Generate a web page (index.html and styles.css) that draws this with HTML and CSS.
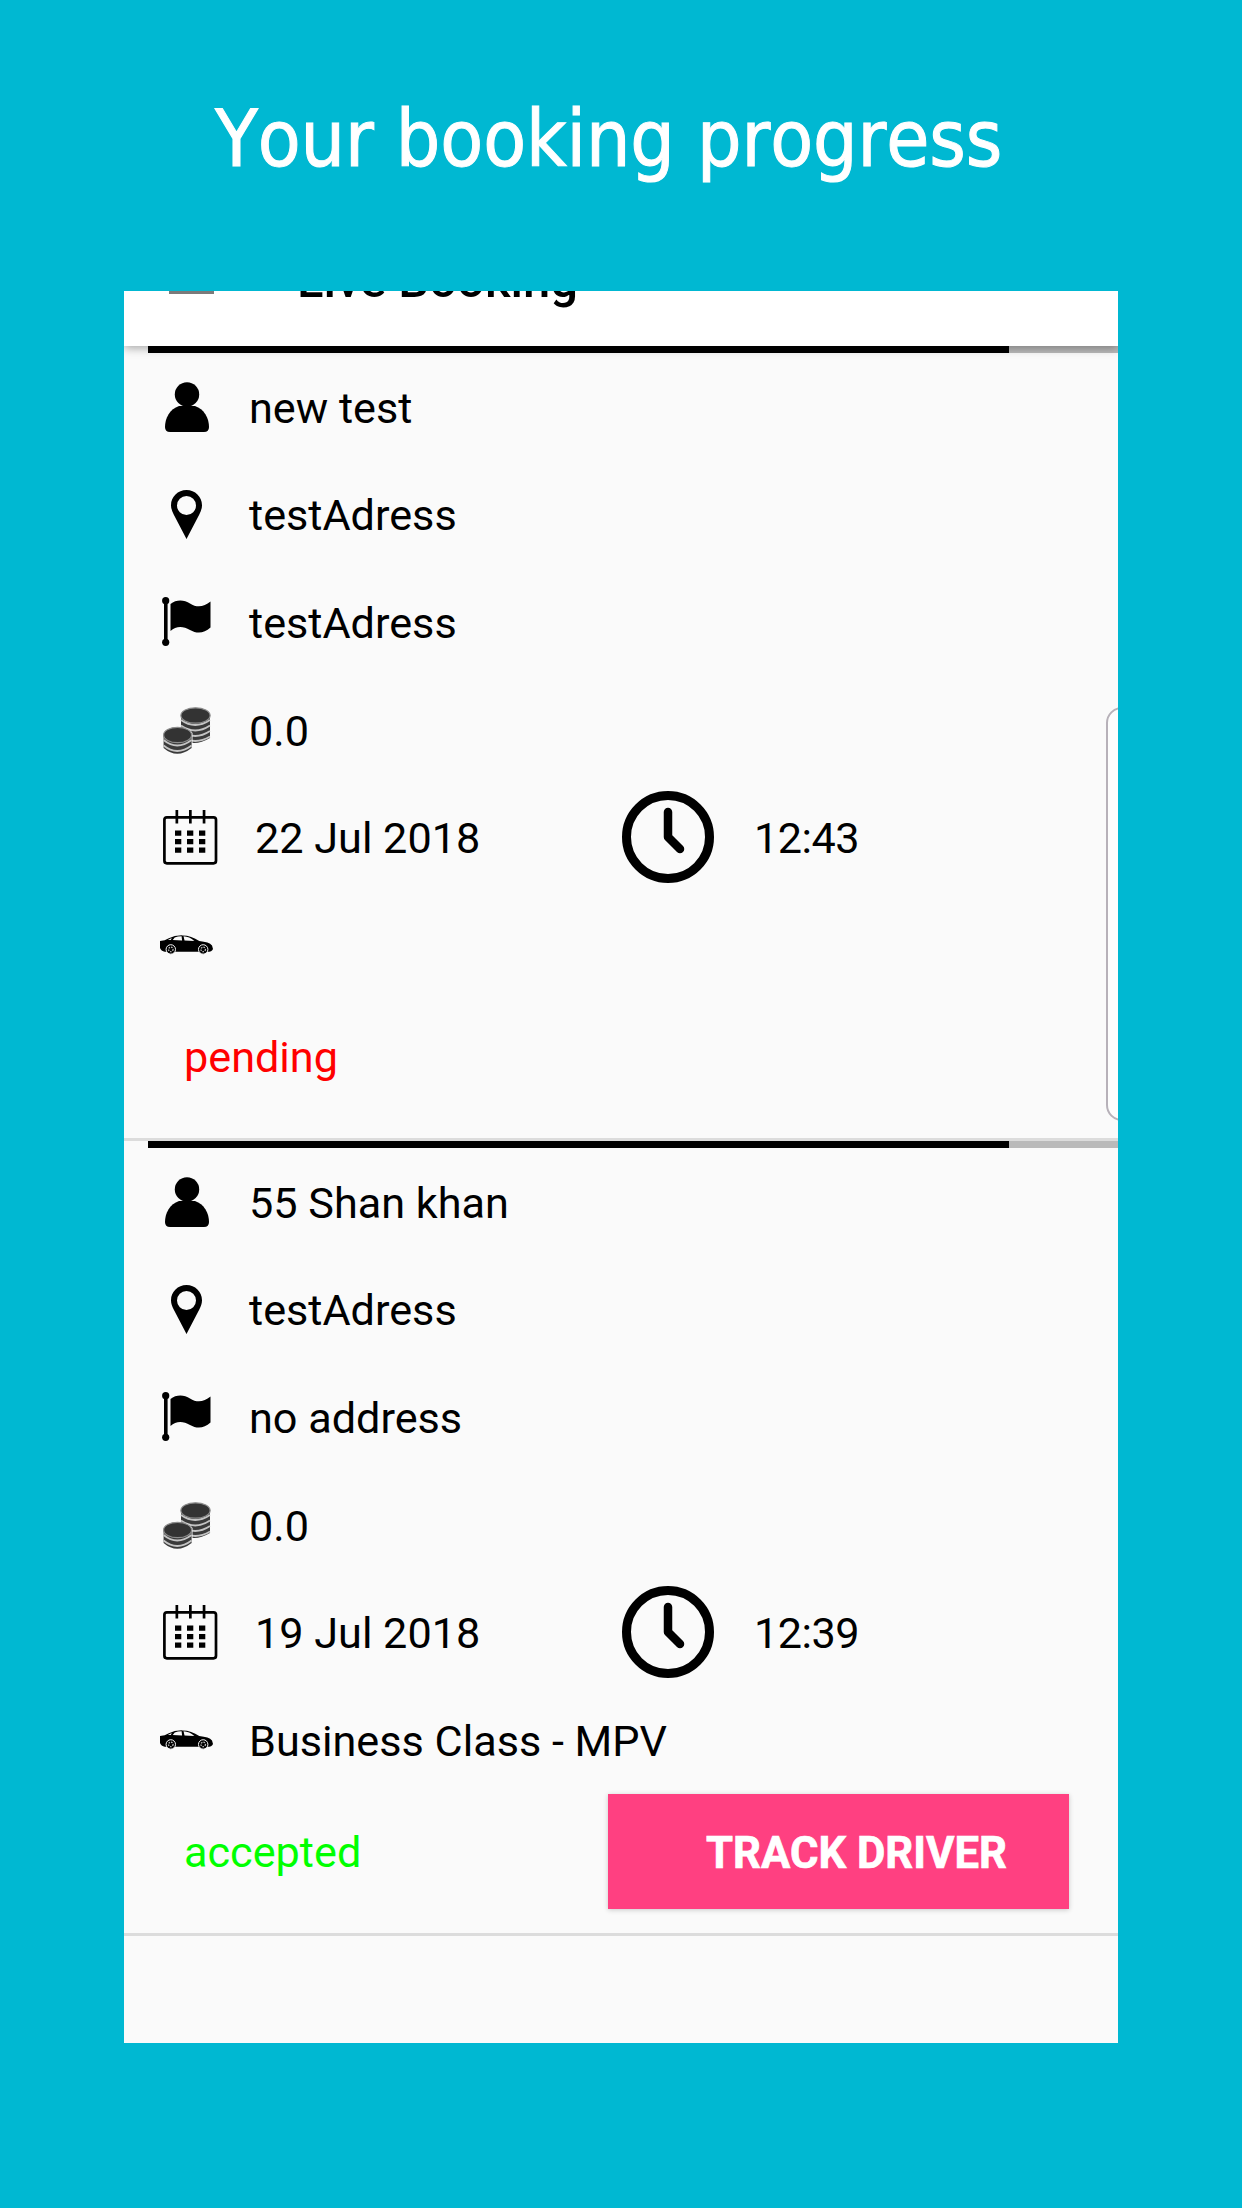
FILE: index.html
```html
<!DOCTYPE html>
<html lang="en">

<head>
    <meta charset="UTF-8">
    <meta name="viewport" content="width=device-width, initial-scale=1.0">

    <title>Live Booking</title>
    <link rel="stylesheet" href="styles.css">
</head>

<body>
    <svg class="sprite">
        <symbol id="person" viewBox="0 0 44 50">
            <circle cx="22" cy="12.4" r="12.2"/>
            <path d="M14 24C5 27 0 36 0 45Q0 50 5 50H39Q44 50 44 45C44 36 39 27 30 24Z"/>
        </symbol>
        <symbol id="pin" viewBox="0 0 31 49">
            <path fill-rule="evenodd" d="M15.500 0C6.900 0 0 6.700 0 15.200C0 18.500 1.200 21.500 2.700 24.500L15.500 49L28.300 24.500C29.800 21.500 31 18.500 31 15.200C31 6.700 24.100 0 15.500 0ZM15.500 6A9.500 9.500 0 1 1 15.500 25A9.500 9.500 0 1 1 15.500 6Z"/>
        </symbol>
        <symbol id="flag" viewBox="0 0 49 49">
            <circle cx="3.700" cy="3.700" r="3.600"/>
            <circle cx="3.700" cy="45.300" r="3.600"/>
            <path d="M2 4H5.600V45H2Z"/>
            <path d="M8.500 7C14 2.500 22 2.500 28 6.500C35 11 42 10 48.500 4.500V30.500C42 36.500 35 37 28 33C21 29 14 29 8.500 34Z"/>
        </symbol>
        <symbol id="coins" viewBox="0 0 48 48">
            <path fill="#3a3a3a" d="M18 8V31Q30 41 47 31V8Z"/>
            <path fill="none" stroke="#c4c4c4" stroke-width="1.800" d="M18 13Q32 23 47 13M18 18.500Q32 28.500 47 18.500M18 24Q32 34 47 24M18 29.500Q32 38.500 47 29.500"/>
            <ellipse cx="32.500" cy="8.500" rx="14.600" ry="7.700" fill="#333" stroke="#8c8c8c" stroke-width="1.200"/>
            <path fill="#fafafa" d="M18 21Q26 20 29.500 26V39H18Z"/>
            <path fill="#3a3a3a" d="M.600 28V41Q14 52.500 28.600 41V28Z"/>
            <path fill="none" stroke="#c4c4c4" stroke-width="1.800" d="M.600 33Q14 44 28.600 33M.600 38.500Q14 49.500 28.600 38.500"/>
            <ellipse cx="14.600" cy="28" rx="14" ry="7.700" fill="#333" stroke="#8c8c8c" stroke-width="1.200"/>
        </symbol>
        <symbol id="calendar" viewBox="0 0 55 55">
            <rect x="1.400" y="7.300" width="51.600" height="46" rx="2.500" fill="none" stroke="#000" stroke-width="2.700"/>
            <path d="M12.500 0H15.200V13.500H12.500ZM26 0H28.700V13.500H26ZM39.700 0H42.400V13.500H39.700Z"/>
            <path d="M12 20.500h6.300v5.200h-6.300zM24 20.500h6.300v5.200h-6.300zM36 20.500h6.300v5.200h-6.300zM12 29h6.300v5.200h-6.300zM24 29h6.300v5.200h-6.300zM36 29h6.300v5.200h-6.300zM12 37.500h6.300v5.200h-6.300zM24 37.500h6.300v5.200h-6.300zM36 37.500h6.300v5.200h-6.300z"/>
        </symbol>
        <symbol id="clock" viewBox="0 0 92 92">
            <circle cx="46" cy="46" r="41.500" fill="none" stroke="#000" stroke-width="9"/>
            <path d="M46 21V46L58 58" fill="none" stroke="#000" stroke-width="8.500" stroke-linecap="round" stroke-linejoin="round"/>
        </symbol>
        <symbol id="car" viewBox="0 0 54 20">
            <path d="M0 6Q5 5.500 9 3Q15 0 23 .2Q32 .2 40 6Q50 7 53 10.500L54 14Q53 17 48 17H5Q1 16 0 13Z"/>
            <path fill="#fafafa" d="M13 5L15 2.300Q18 1.200 22 1.200L22.500 5.500ZM24 1.200Q30 1.500 35 6L25 5.500ZM8 5L12 2.800L11 5Z"/>
            <g stroke="#fafafa" stroke-width="1">
                <circle cx="11" cy="14.500" r="4.800"/>
                <circle cx="44" cy="14.500" r="4.800"/>
            </g>
            <g fill="none" stroke="#bbb" stroke-width="1.300" stroke-dasharray="1.500 1">
                <circle cx="11" cy="14.500" r="2.300"/>
                <circle cx="44" cy="14.500" r="2.300"/>
            </g>
        </symbol>
    </svg>

    <h1 class="title">Your booking progress</h1>

    <div class="screen">
        <div class="toolbar">
            <div class="menu"></div>
            <div class="toolbar_title">Live Booking</div>
        </div>

        <div class="booking">
            <div class="progress"><div class="progress_done"></div></div>
            <div class="row">
                <div class="icon"><svg class="person"><use href="#person"/></svg></div>
                <p class="text">new test</p>
            </div>
            <div class="row">
                <div class="icon"><svg class="pin"><use href="#pin"/></svg></div>
                <p class="text">testAdress</p>
            </div>
            <div class="row">
                <div class="icon"><svg class="flag"><use href="#flag"/></svg></div>
                <p class="text">testAdress</p>
            </div>
            <div class="row">
                <div class="icon"><svg class="coins"><use href="#coins"/></svg></div>
                <p class="text">0.0</p>
            </div>
            <div class="row">
                <div class="icon icon_date"><svg class="calendar"><use href="#calendar"/></svg></div>
                <p class="text date">22 Jul 2018</p>
                <svg class="clock"><use href="#clock"/></svg>
                <p class="text time">12:43</p>
            </div>
            <div class="row">
                <div class="icon"><svg class="car"><use href="#car"/></svg></div>
                <p class="text"></p>
            </div>
            <div class="footer">
                <p class="text pending">pending</p>
            </div>
        </div>

        <div class="booking">
            <div class="progress"><div class="progress_done"></div></div>
            <div class="row">
                <div class="icon"><svg class="person"><use href="#person"/></svg></div>
                <p class="text">55 Shan khan</p>
            </div>
            <div class="row">
                <div class="icon"><svg class="pin"><use href="#pin"/></svg></div>
                <p class="text">testAdress</p>
            </div>
            <div class="row">
                <div class="icon"><svg class="flag"><use href="#flag"/></svg></div>
                <p class="text">no address</p>
            </div>
            <div class="row">
                <div class="icon"><svg class="coins"><use href="#coins"/></svg></div>
                <p class="text">0.0</p>
            </div>
            <div class="row">
                <div class="icon icon_date"><svg class="calendar"><use href="#calendar"/></svg></div>
                <p class="text date">19 Jul 2018</p>
                <svg class="clock"><use href="#clock"/></svg>
                <p class="text time">12:39</p>
            </div>
            <div class="row">
                <div class="icon"><svg class="car"><use href="#car"/></svg></div>
                <p class="text">Business Class - MPV</p>
            </div>
            <div class="footer">
                <p class="text accepted">accepted</p>
                <button class="track">TRACK DRIVER</button>
            </div>
        </div>

        <div class="edge_handle"></div>
    </div>
</body>

</html>
```

FILE: styles.css
```css
* {
    box-sizing: border-box;
}

body {
    margin: 0;
    height: 2208px;
    overflow: hidden;
    background-color: #00b8d2;
    color: black;
    font-family: Roboto, "Liberation Sans", sans-serif;
}

.sprite {
    display: none;
}

.title {
    margin: 0;
    height: 291px;
    padding: 79px 0 0 215px;
    color: white;
    font-family: "DejaVu Sans Condensed", "DejaVu Sans", sans-serif;
    font-stretch: condensed;
    font-size: 78px;
    font-weight: 400;
    font-kerning: none;
    line-height: 120px;
    letter-spacing: -0.1px;
    white-space: nowrap;
    -webkit-text-stroke: 1px white;
}

.screen {
    position: relative;
    width: 994px;
    height: 1752px;
    margin-left: 124px;
    overflow: hidden;
    background-color: #fafafa;
}

/* the toolbar is half scrolled out of the screen */
.toolbar {
    position: relative;
    z-index: 1;
    display: flex;
    height: 55px;
    padding-left: 45px;
    background-color: white;
    box-shadow: 0 2px 9px rgba(0, 0, 0, 0.35);
}

.menu {
    width: 45px;
    height: 3px;
    background-color: #7b7b7b;
}

.toolbar_title {
    height: 60px;
    margin-top: -40px;
    margin-left: 83px;
    font-size: 49px;
    font-weight: 500;
    line-height: 60px;
    white-space: nowrap;
}

.booking {
    height: 795px;
    border-bottom: 3px solid #dcdcdc;
}

.progress {
    height: 7px;
    margin-left: 24px;
    background-color: #bababa;
}

.progress_done {
    width: 861px;
    height: 7px;
    background-color: black;
}

/* the first bar shows above the toolbar shadow */
.toolbar + .booking .progress_done {
    position: relative;
    z-index: 2;
}

.row {
    display: flex;
    align-items: center;
    height: 107.6px;
    padding-left: 36px;
}

.icon {
    display: flex;
    justify-content: center;
    width: 53px;
    margin-right: 36px;
}

.icon_date {
    width: 59px;
    padding-left: 1px;
}

.text {
    margin: 0;
    padding-top: 4px;
    font-size: 43.2px;
    line-height: 50px;
    white-space: nowrap;
}

.date {
    width: 367px;
}

.time {
    letter-spacing: -0.5px;
}

.person {
    width: 44px;
    height: 50px;
}

.pin {
    width: 31px;
    height: 49px;
}

.flag {
    width: 49px;
    height: 49px;
}

.coins {
    width: 48px;
    height: 48px;
    margin-top: 3px;
}

.calendar {
    width: 55px;
    height: 55px;
}

.clock {
    width: 92px;
    height: 92px;
    margin-right: 40px;
}

.car {
    width: 54px;
    height: 20px;
}

.footer {
    display: flex;
    justify-content: space-between;
    align-items: center;
    height: 115px;
    padding: 0 49px 0 60px;
}

.pending {
    color: #ff0000;
}

.accepted {
    color: #00ff00;
}

.track {
    width: 461px;
    height: 115px;
    padding: 4px 0 0 36px;
    border: none;
    background-color: #ff4081;
    box-shadow: 0 1px 5px rgba(0, 0, 0, 0.2);
    color: white;
    font-family: inherit;
    font-size: 43.6px;
    font-weight: 700;
    -webkit-text-stroke: 0.7px white;
}

.edge_handle {
    position: absolute;
    top: 416px;
    right: -30px;
    width: 42px;
    height: 414px;
    border: 2px solid #b7b1b9;
    border-radius: 16px;
    background-color: #fdfdfd;
}
```
